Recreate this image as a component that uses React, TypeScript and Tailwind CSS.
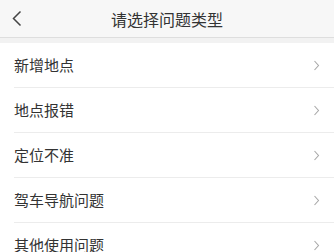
import { ReactNode } from "react";

const items = ["新增地点", "地点报错", "定位不准", "驾车导航问题", "其他使用问题"];

const Chevron = () => (
  <svg width="7" height="11" viewBox="0 0 7 11" fill="none" className="shrink-0">
    <path d="M1.5 1 L5.5 5.5 L1.5 10" stroke="#a8a8a8" strokeWidth="1.1" />
  </svg>
);

const Row = ({ children, last }: { children: ReactNode; last?: boolean }) => (
  <div className="pl-[14px]">
    <div
      className={`flex h-[45px] items-center justify-between pr-[14px] ${
        last ? "" : "border-b border-[#ececec]"
      }`}
    >
      <span className="text-[15px] text-[#333333]">{children}</span>
      <Chevron />
    </div>
  </div>
);

export default function App() {
  return (
    <div
      className="h-[252px] w-[334px] overflow-hidden bg-white"
      style={{ fontFamily: '"Noto Sans CJK SC", "Noto Sans", sans-serif' }}
    >
      {/* header */}
      <div className="relative flex h-[38px] items-center justify-center border-b border-[#dedede] bg-[#f7f7f7]">
        <button className="absolute left-[11px] top-[10px]">
          <svg width="12" height="17" viewBox="0 0 12 17" fill="none">
            <path d="M9.5 1.5 L2.5 8.5 L9.5 15.5" stroke="#444444" strokeWidth="1.5" />
          </svg>
        </button>
        <span className="text-[16px] text-[#333333]">请选择问题类型</span>
      </div>
      <div className="h-[5px] bg-[#f2f2f2]" />

      {/* list */}
      <div>
        {items.map((label, i) => (
          <Row key={label} last={i === items.length - 1}>
            {label}
          </Row>
        ))}
      </div>
    </div>
  );
}
